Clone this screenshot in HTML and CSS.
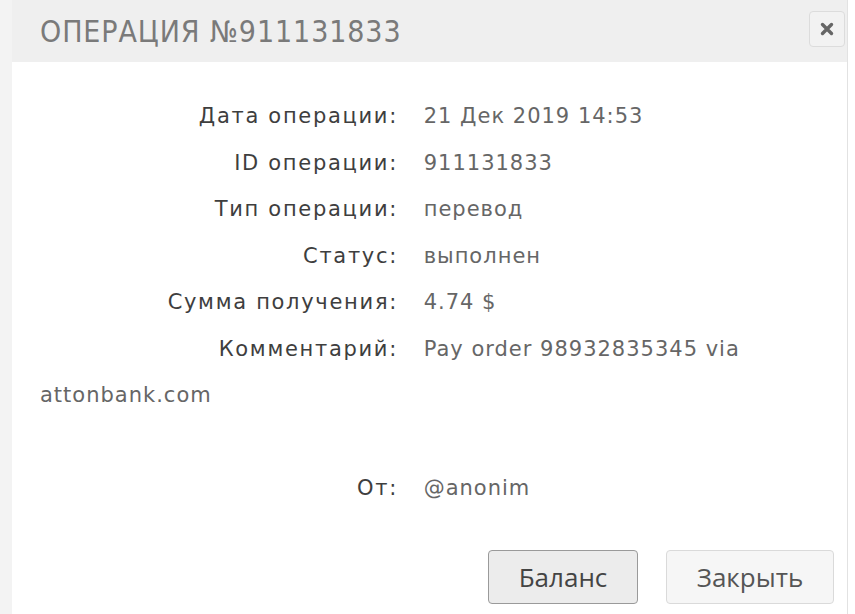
FILE: index.html
```html
<!DOCTYPE html>
<html>
<head>
<meta charset="utf-8">
<title>Операция №911131833</title>
<link rel="stylesheet" href="styles.css">
</head>
<body>
<div class="dialog">
  <div class="dialog-head">
    <span class="dialog-title">ОПЕРАЦИЯ №911131833</span>
    <button class="close-btn" type="button">
      <svg width="14" height="14" viewBox="0 0 14 14"><path d="M2.5 2.5 L11.5 11.5 M11.5 2.5 L2.5 11.5" stroke="#666" stroke-width="3.4" stroke-linecap="round"/></svg>
    </button>
  </div>

  <div class="dialog-body">
    <p class="row"><span class="label">Дата операции:</span> <span class="value">21 Дек 2019 14:53</span></p>
    <p class="row"><span class="label">ID операции:</span> <span class="value">911131833</span></p>
    <p class="row"><span class="label">Тип операции:</span> <span class="value">перевод</span></p>
    <p class="row"><span class="label">Статус:</span> <span class="value">выполнен</span></p>
    <p class="row"><span class="label">Сумма получения:</span> <span class="value">4.74 $</span></p>
    <p class="row"><span class="label">Комментарий:</span> <span class="value">Pay order 98932835345 via attonbank.com</span><br><br></p>
    <p class="row"><span class="label">От:</span> <span class="value">@anonim</span></p>
  </div>

  <div class="dialog-foot">
    <button class="btn btn-dark" type="button">Баланс</button>
    <button class="btn" type="button">Закрыть</button>
  </div>
</div>
</body>
</html>
```

FILE: styles.css
```css
body {
   margin: 0;
   background-color: white;
   font-family: "DejaVu Sans", sans-serif;
}

.dialog {
   width: 835px;
   height: 614px;
   border-left: 12px solid #f3f3f3;
   border-right: 1px solid #e2e2e2;
   background-color: white;
   display: flex;
   flex-direction: column;
}

.dialog-head {
   height: 62px;
   flex-shrink: 0;
   background-color: #efefef;
   display: flex;
   align-items: center;
   justify-content: space-between;
   padding: 0 2px 0 28px;
}

.dialog-title {
   font-family: "DejaVu Sans Condensed", "DejaVu Sans", sans-serif;
   font-size: 30px;
   color: #7a7a7a;
   letter-spacing: 0.9px;
}

.close-btn {
   width: 36px;
   height: 36px;
   margin-top: -4px;
   border: 1px solid #dcdcdc;
   border-radius: 4px;
   background-color: #f2f2f2;
   display: flex;
   align-items: center;
   justify-content: center;
   padding: 0;
}

.dialog-body {
   padding: 31px 20px 0 28px;
   font-size: 21px;
   color: #666;
}

.row {
   margin: 0;
   line-height: 46.5px;
}

.label {
   display: inline-block;
   width: 358px;
   text-align: right;
   color: #3e3e3e;
   letter-spacing: 1.7px;
}

.value {
   margin-left: 19px;
   letter-spacing: 1px;
}

.dialog-foot {
   display: flex;
   justify-content: flex-end;
   gap: 28px;
   padding: 38px 13px 0 0;
}

.btn {
   font-family: "Open Sans", sans-serif;
   font-size: 26px;
   color: #555;
   height: 54px;
   width: 168px;
   border: 1px solid #dadada;
   border-radius: 4px;
   background-color: #f6f6f6;
}

.btn-dark {
   width: 150px;
   border-color: #9a9a9a;
   background-color: #ececec;
   color: #444;
}
```
